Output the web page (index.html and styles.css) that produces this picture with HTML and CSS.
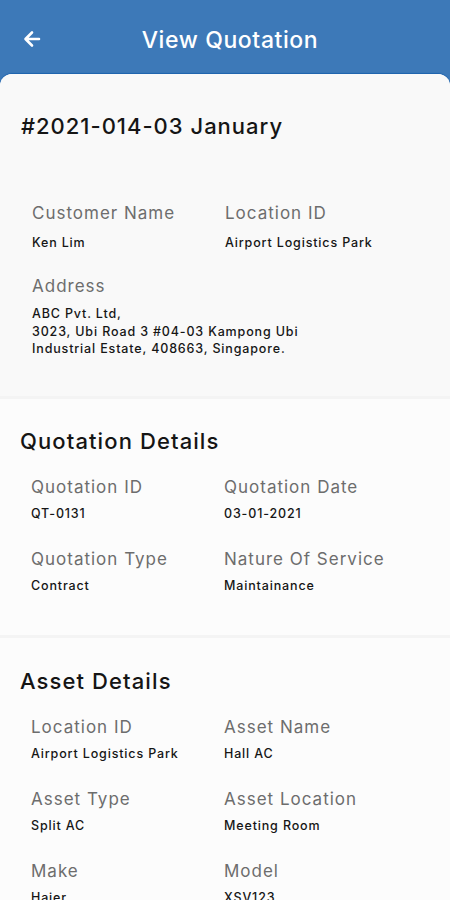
FILE: index.html
```html
<!DOCTYPE html>
<html lang="en">
<head>
<meta charset="utf-8">
<title>View Quotation</title>
<link rel="stylesheet" href="styles.css">
</head>
<body>
<div class="app">
  <header class="topbar">
    <svg class="back" viewBox="0 0 20 20" width="20" height="20" aria-hidden="true">
      <path d="M17 10H4M10 3.5L3.5 10 10 16.5" fill="none" stroke="#fff" stroke-width="2.6" stroke-linecap="round" stroke-linejoin="round"/>
    </svg>
    <h1 class="topbar-title">View Quotation</h1>
  </header>
  <main class="sheet">
    <section class="block block-first">
      <h2 class="quote-no">#2021-014-03 January</h2>
      <div class="fields fields-first">
        <div class="field">
          <div class="label">Customer Name</div>
          <div class="value">Ken Lim</div>
        </div>
        <div class="field">
          <div class="label">Location ID</div>
          <div class="value">Airport Logistics Park</div>
        </div>
        <div class="field field-wide">
          <div class="label">Address</div>
          <div class="value value-multi">ABC Pvt. Ltd,<br>3023, Ubi Road 3 #04-03 Kampong Ubi<br>Industrial Estate, 408663, Singapore.</div>
        </div>
      </div>
    </section>
    <section class="block">
      <h2 class="block-title">Quotation Details</h2>
      <div class="fields">
        <div class="field">
          <div class="label">Quotation ID</div>
          <div class="value">QT-0131</div>
        </div>
        <div class="field">
          <div class="label">Quotation Date</div>
          <div class="value">03-01-2021</div>
        </div>
        <div class="field">
          <div class="label">Quotation Type</div>
          <div class="value">Contract</div>
        </div>
        <div class="field">
          <div class="label">Nature Of Service</div>
          <div class="value">Maintainance</div>
        </div>
      </div>
    </section>
    <section class="block block-last">
      <h2 class="block-title">Asset Details</h2>
      <div class="fields">
        <div class="field">
          <div class="label">Location ID</div>
          <div class="value">Airport Logistics Park</div>
        </div>
        <div class="field">
          <div class="label">Asset Name</div>
          <div class="value">Hall AC</div>
        </div>
        <div class="field">
          <div class="label">Asset Type</div>
          <div class="value">Split AC</div>
        </div>
        <div class="field">
          <div class="label">Asset Location</div>
          <div class="value">Meeting Room</div>
        </div>
        <div class="field">
          <div class="label">Make</div>
          <div class="value">Haier</div>
        </div>
        <div class="field">
          <div class="label">Model</div>
          <div class="value">XSV123</div>
        </div>
      </div>
    </section>
  </main>
</div>
</body>
</html>
```
FILE: styles.css
```css
* { box-sizing: border-box; margin: 0; padding: 0; }
html, body { height: 100%; }
body {
  font-family: Inter, "Open Sans", sans-serif;
  background: #3d79b8;
  overflow: hidden;
}
.app { width: 450px; min-height: 900px; background: #3d79b8; }
.topbar {
  height: 74px;
  display: flex;
  align-items: center;
  padding: 0 22px;
}
.back { display: block; flex: none; margin-top: 4px; }
.topbar-title {
  flex: 1;
  text-align: center;
  color: #fff;
  font-size: 23px;
  font-weight: 500;
  letter-spacing: 0.6px;
  margin-left: -20px;
  padding-left: 10px;
  margin-top: 5px;
}
.sheet {
  background: #fcfcfc;
  border-radius: 12px 12px 0 0;
  box-shadow: 0 -1px 1px #1d63ad;
  overflow: hidden;
  min-height: 826px;
}
.block {
  background: #fcfcfc;
  border-top: 3px solid #f4f4f4;
  padding: 27px 0 40px 20px;
}
.block-last { padding-top: 28px; }
.block-first {
  background: #f9f9f9;
  border-top: none;
  padding: 37px 0 38px 21px;
}
.quote-no {
  font-size: 22px;
  font-weight: 500;
  color: #151515;
  line-height: 30px;
  letter-spacing: 1px;
}
.block-title {
  font-size: 22px;
  font-weight: 500;
  color: #151515;
  line-height: 30px;
  letter-spacing: 1.1px;
}
.fields {
  display: grid;
  grid-template-columns: 193px 1fr;
  row-gap: 24px;
  padding-left: 11px;
  margin-top: 19px;
}
.fields-first { margin-top: 60px; row-gap: 22px; }
.field-wide { grid-column: 1 / -1; }
.label {
  font-size: 17px;
  line-height: 24px;
  color: #6d6d6d;
  letter-spacing: 1px;
}
.value {
  margin-top: 6px;
  font-size: 12.5px;
  line-height: 18px;
  font-weight: 500;
  color: #161616;
  letter-spacing: 0.85px;
}
.fields-first .value { margin-top: 9px; }
.fields-first .value-multi { margin-top: 7px; line-height: 17.5px; }
```
